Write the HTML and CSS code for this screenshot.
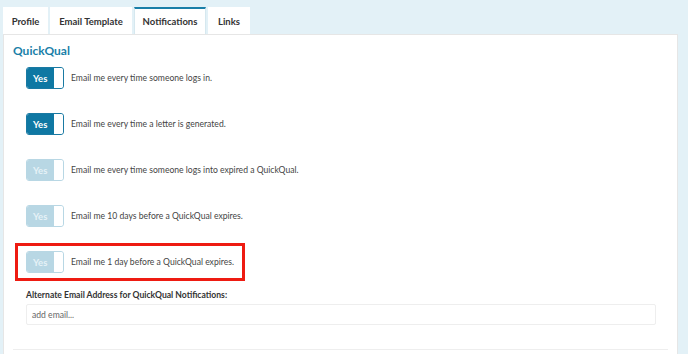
FILE: index.html
```html
<!DOCTYPE html>
<html>
<head>
<meta charset="utf-8">
<link rel="stylesheet" href="styles.css">
</head>
<body>
<div class="page">
  <nav class="tabs">
    <div class="tab">Profile</div>
    <div class="tab">Email Template</div>
    <div class="tab active">Notifications</div>
    <div class="tab">Links</div>
  </nav>
  <section class="panel">
    <h2 class="title">QuickQual</h2>
    <div class="rows">
      <div class="row"><span class="toggle on"><span class="yes">Yes</span><span class="knob"></span></span><span class="label">Email me every time someone logs in.</span></div>
      <div class="row"><span class="toggle on"><span class="yes">Yes</span><span class="knob"></span></span><span class="label">Email me every time a letter is generated.</span></div>
      <div class="row"><span class="toggle off"><span class="yes">Yes</span><span class="knob"></span></span><span class="label">Email me every time someone logs into expired a QuickQual.</span></div>
      <div class="row"><span class="toggle off"><span class="yes">Yes</span><span class="knob"></span></span><span class="label">Email me 10 days before a QuickQual expires.</span></div>
      <div class="row highlight"><span class="toggle off"><span class="yes">Yes</span><span class="knob"></span></span><span class="label">Email me 1 day before a QuickQual expires.</span></div>
    </div>
    <div class="field">
      <label class="field-label">Alternate Email Address for QuickQual Notifications:</label>
      <div class="input">add email...</div>
    </div>
    <hr class="rule">
  </section>
</div>
</body>
</html>
```
FILE: styles.css
```css
* { box-sizing: border-box; }
html, body { margin: 0; padding: 0; }
body {
  background: #e3f1f7;
  font-family: Lato, "Open Sans", sans-serif;
  color: #444;
  width: 688px;
  height: 354px;
  overflow: hidden;
}
.page {
  padding: 7px 10px 0 3px;
}
.tabs {
  display: flex;
  gap: 2px;
  height: 27px;
}
.tab {
  background: #fff;
  font-size: 9.5px;
  font-weight: 700;
  color: #333;
  display: flex;
  align-items: center;
  justify-content: center;
  white-space: nowrap;
  border-top: 1px solid #fff;
}
.tab:nth-child(1) { width: 45px; }
.tab:nth-child(2) { width: 82px; }
.tab:nth-child(3) { width: 72px; border-top: 2px solid #1a7fa8; border-left: 1px solid #d6e8ef; border-right: 1px solid #d6e8ef; }
.tab:nth-child(4) { width: 42px; }
.panel {
  background: #fff;
  border: 1px solid #e6e6e6;
  border-bottom: none;
  height: 330px;
  padding: 9px 0 0 9px;
}
.title {
  margin: 0;
  font-size: 12px;
  font-weight: 700;
  color: #1a7fa8;
  line-height: 14px;
}
.rows {
  display: flex;
  flex-direction: column;
  gap: 24px;
  margin-top: 9px;
  padding-left: 13px;
}
.row {
  display: flex;
  align-items: center;
  gap: 7px;
  height: 22px;
}
.toggle {
  display: flex;
  width: 38px;
  height: 22px;
  border-radius: 3px;
  overflow: hidden;
  border: 1px solid #1a7aa3;
}
.toggle .yes {
  flex: 1;
  color: #fff;
  font-size: 9.5px;
  font-weight: 700;
  display: flex;
  align-items: center;
  padding-left: 6px;
}
.toggle .knob {
  width: 9px;
  background: #fff;
  border-radius: 0 2px 2px 0;
}
.toggle.on { border-color: #1a7aa3; }
.toggle.on .yes { background: #0f78a3; }
.toggle.off { border-color: #b8d7e4; }
.toggle.off .yes { background: #b8d7e4; color: #e6f2f7; }
.label {
  font-size: 8.6px;
  color: #444;
}
.highlight {
  outline: 3px solid #ee1b12;
  margin-left: -8px;
  padding-left: 8px;
  width: 224px;
  height: 32px;
  margin-top: -5px;
  margin-bottom: -5px;
}
.field {
  margin-top: 17px;
  padding-left: 13px;
  padding-right: 21px;
}
.field-label {
  display: block;
  font-size: 8.6px;
  font-weight: 700;
  color: #333;
  margin-bottom: 4px;
}
.input {
  border: 1px solid #eee;
  border-radius: 2px;
  height: 21px;
  font-size: 8.6px;
  color: #666;
  display: flex;
  align-items: center;
  padding-left: 5px;
}
.rule {
  border: none;
  border-top: 1px solid #eee;
  margin: 24px 9px 0 0;
}
```
